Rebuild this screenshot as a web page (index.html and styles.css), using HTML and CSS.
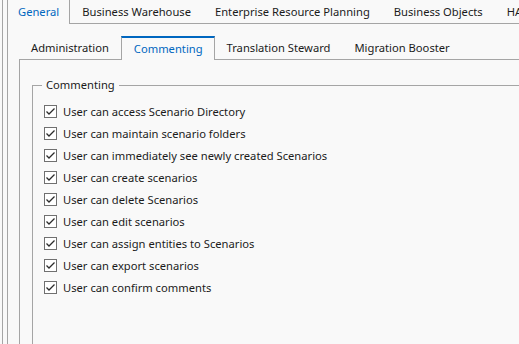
FILE: index.html
```html
<!DOCTYPE html>
<html lang="en">
<head>
    <meta charset="UTF-8">
    <meta name="viewport" content="width=device-width, initial-scale=1.0">
    <title>Permissions</title>
    <link rel="stylesheet" href="styles.css">
</head>
<body>
    <div class="frame">
        <div class="tab-strip">
            <div class="tab active">General</div>
            <div class="tab">Business Warehouse</div>
            <div class="tab">Enterprise Resource Planning</div>
            <div class="tab">Business Objects</div>
            <div class="tab">HANA</div>
        </div>

        <div class="tab-panel">
            <div class="tab-strip sub">
                <div class="tab">Administration</div>
                <div class="tab active accent">Commenting</div>
                <div class="tab">Translation Steward</div>
                <div class="tab">Migration Booster</div>
            </div>

            <div class="tab-panel sub-panel">
                <fieldset class="group">
                    <legend>Commenting</legend>
                    <label class="check-row"><span class="box"><svg viewBox="0 0 11 11"><polyline points="1.5,5.5 4,8 9.5,2.5"/></svg></span>User can access Scenario Directory</label>
                    <label class="check-row"><span class="box"><svg viewBox="0 0 11 11"><polyline points="1.5,5.5 4,8 9.5,2.5"/></svg></span>User can maintain scenario folders</label>
                    <label class="check-row"><span class="box"><svg viewBox="0 0 11 11"><polyline points="1.5,5.5 4,8 9.5,2.5"/></svg></span>User can immediately see newly created Scenarios</label>
                    <label class="check-row"><span class="box"><svg viewBox="0 0 11 11"><polyline points="1.5,5.5 4,8 9.5,2.5"/></svg></span>User can create scenarios</label>
                    <label class="check-row"><span class="box"><svg viewBox="0 0 11 11"><polyline points="1.5,5.5 4,8 9.5,2.5"/></svg></span>User can delete Scenarios</label>
                    <label class="check-row"><span class="box"><svg viewBox="0 0 11 11"><polyline points="1.5,5.5 4,8 9.5,2.5"/></svg></span>User can edit scenarios</label>
                    <label class="check-row"><span class="box"><svg viewBox="0 0 11 11"><polyline points="1.5,5.5 4,8 9.5,2.5"/></svg></span>User can assign entities to Scenarios</label>
                    <label class="check-row"><span class="box"><svg viewBox="0 0 11 11"><polyline points="1.5,5.5 4,8 9.5,2.5"/></svg></span>User can export scenarios</label>
                    <label class="check-row"><span class="box"><svg viewBox="0 0 11 11"><polyline points="1.5,5.5 4,8 9.5,2.5"/></svg></span>User can confirm comments</label>
                </fieldset>
            </div>
        </div>
    </div>
</body>
</html>
```

FILE: styles.css
```css
html, body {
    margin: 0;
    height: 100%;
    overflow: hidden;
}

body {
    background-color: #f9f9f9;
    font-family: "Noto Sans", "Open Sans", sans-serif;
    font-size: 11.2px;
    color: #1b1b1b;
}

/* Frame is wider and taller than the window: the dialog is cut off */
.frame {
    margin-left: 2px;
    border-left: 1px solid #a5a5a5;
    padding-left: 4px;
    width: 600px;
    height: 400px;
    display: flex;
    flex-direction: column;
}

/* Tabs */
.tab-strip {
    display: flex;
    align-items: flex-end;
    height: 23px;
    white-space: nowrap;
}

.tab {
    padding: 0 12px;
    height: 22px;
    line-height: 22px;
}

.tab.active {
    position: relative;
    z-index: 1;
    height: 24px;
    line-height: 24px;
    margin-bottom: -1px;
    padding: 0 10px;
    border: 1px solid #a5a5a5;
    border-bottom: none;
    background-color: #f9f9f9;
    color: #0067c0;
}

.tab.accent {
    border-top: 2px solid #0067c0;
    height: 22px;
    line-height: 21px;
    padding: 0 11px 0 12px;
}

.tab-panel {
    flex: 1;
    border-left: 1px solid #a5a5a5;
    border-top: 1px solid #a5a5a5;
    padding-left: 11px;
    display: flex;
    flex-direction: column;
}

.tab-strip.sub {
    height: 35px;
}

.sub-panel {
    padding-left: 12px;
    padding-top: 17px;
}

/* Group box */
.group {
    margin: 0;
    flex: 1;
    border: 1px solid #a5a5a5;
    padding: 7px 0 0 11px;
    min-width: 0;
}

.group legend {
    margin-left: -2px;
    padding: 0 4px;
    line-height: 16px;
}

.check-row {
    display: flex;
    align-items: center;
    height: 22px;
}

.box {
    width: 11px;
    height: 11px;
    border: 1px solid #707070;
    background-color: #ffffff;
    margin-right: 6px;
    display: flex;
}

.box svg {
    width: 11px;
    height: 11px;
    fill: none;
    stroke: #2b2b2b;
    stroke-width: 1.3;
}
```
